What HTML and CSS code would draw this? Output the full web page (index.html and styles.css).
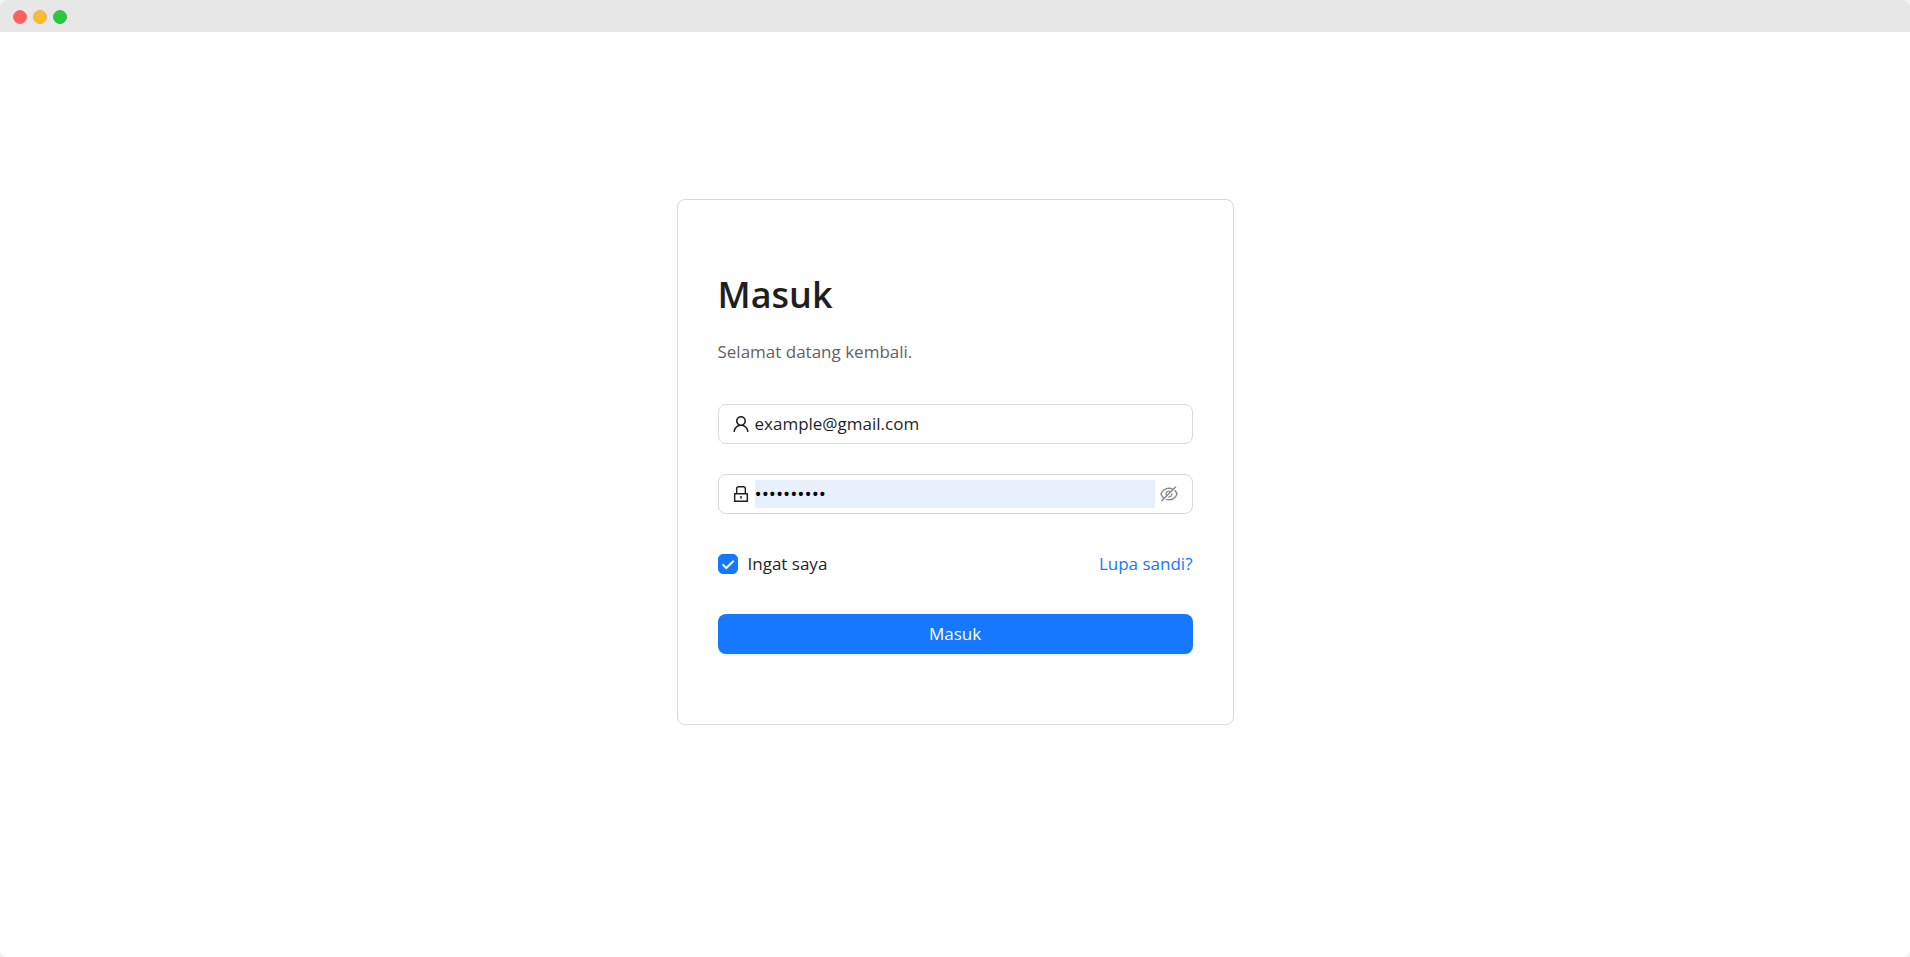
FILE: index.html
```html
<!DOCTYPE html>
<html lang="id">
<head>
  <meta charset="utf-8">
  <meta name="viewport" content="width=device-width, initial-scale=1">
  <title>Masuk</title>
  <link rel="stylesheet" href="styles.css">
</head>
<body>
  <div class="window">
    <header class="titlebar">
      <span class="dot dot-close"></span>
      <span class="dot dot-minimize"></span>
      <span class="dot dot-maximize"></span>
    </header>
    <main class="content">
      <form class="card">
        <h1 class="title">Masuk</h1>
        <p class="subtitle">Selamat datang kembali.</p>
        <div class="field">
          <svg class="icon" viewBox="64 64 896 896" aria-hidden="true"><path d="M858.5 763.6a374 374 0 00-80.6-119.5 375.63 375.63 0 00-119.5-80.6c-.4-.2-.8-.3-1.2-.5C719.5 518 760 444.7 760 362c0-137-111-248-248-248S264 225 264 362c0 82.7 40.5 156 102.8 201.1-.4.2-.8.3-1.2.5-44.8 18.9-85 46-119.5 80.6a375.63 375.63 0 00-80.6 119.5A371.7 371.7 0 00136 901.8a8 8 0 008 8.2h60c4.4 0 7.9-3.5 8-7.8 2-77.2 33-149.5 87.8-204.3 56.7-56.7 132-87.9 212.2-87.9s155.5 31.2 212.2 87.9C779 752.7 810 825 812 902.2c.1 4.4 3.6 7.8 8 7.8h60a8 8 0 008-8.2c-1-47.8-10.9-94.3-29.5-138.2zM512 534c-45.9 0-89.1-17.9-121.6-50.4S340 407.9 340 362c0-45.9 17.9-89.1 50.4-121.6S466.1 190 512 190s89.1 17.9 121.6 50.4S684 316.1 684 362c0 45.9-17.9 89.1-50.4 121.6S557.9 534 512 534z"/></svg>
          <input class="input" type="email" value="example@gmail.com" aria-label="Email">
        </div>
        <div class="field">
          <svg class="icon" viewBox="64 64 896 896" aria-hidden="true"><path d="M832 464h-68V240c0-70.7-57.3-128-128-128H388c-70.7 0-128 57.3-128 128v224h-68c-17.7 0-32 14.3-32 32v384c0 17.7 14.3 32 32 32h640c17.7 0 32-14.3 32-32V496c0-17.7-14.3-32-32-32zM332 240c0-30.9 25.1-56 56-56h248c30.9 0 56 25.1 56 56v224H332V240zm460 600H232V536h560v304zM484 701v53c0 4.4 3.6 8 8 8h40c4.4 0 8-3.6 8-8v-53a48.01 48.01 0 10-56 0z"/></svg>
          <input class="input input-filled" type="password" value="contoh1234" aria-label="Kata sandi">
          <button class="reveal" type="button" aria-label="Tampilkan sandi">
            <svg class="icon" viewBox="64 64 896 896" aria-hidden="true"><path d="M942.2 486.2Q889.47 375.11 816.7 305l-50.88 50.88C807.31 395.53 843.45 447.4 874.7 512 791.5 684.2 673.4 766 512 766q-72.67 0-133.87-22.38L323 798.75Q408 838 512 838q288.3 0 430.2-300.3a60.29 60.29 0 000-51.5zm-63.57-320.64L836 122.88a8 8 0 00-11.32 0L715.31 232.2Q624.86 186 512 186q-288.3 0-430.2 300.3a60.3 60.3 0 000 51.5q56.69 119.4 136.5 191.41L112.48 835a8 8 0 000 11.31L155.17 889a8 8 0 0011.31 0l712.15-712.12a8 8 0 000-11.32zM149.3 512C232.6 339.8 350.7 258 512 258c54.54 0 104.13 9.36 149.12 28.39l-70.3 70.3a176 176 0 00-238.13 238.13l-83.42 83.42C223.1 637.49 183.3 582.28 149.3 512zm246.7 0a112.11 112.11 0 01146.2-106.69L401.31 546.2A112 112 0 01396 512z"/><path d="M508 624c-3.46 0-6.87-.16-10.25-.47l-52.82 52.82a176.09 176.09 0 00227.42-227.42l-52.82 52.82c.31 3.38.47 6.79.47 10.25a111.94 111.94 0 01-112 112z"/></svg>
          </button>
        </div>
        <div class="options">
          <label class="remember">
            <span class="tick">
              <input class="checkbox" type="checkbox" checked>
              <svg class="check" viewBox="0 0 20 20" aria-hidden="true"><path d="M4.6 10.4l3.6 3.6 7.6-7.2"/></svg>
            </span>
            Ingat saya
          </label>
          <a class="link" href="#">Lupa sandi?</a>
        </div>
        <button class="submit" type="submit">Masuk</button>
      </form>
    </main>
  </div>
</body>
</html>
```
FILE: styles.css
```css
* {
  box-sizing: border-box;
}

body {
  margin: 0;
  background: #f2f2f2;
  color: #1f1f1f;
  font-family: "Segoe UI", "Open Sans", "Noto Sans", sans-serif;
  font-size: 17px;
  line-height: 28px;
}

.window {
  display: flex;
  flex-direction: column;
  min-height: 100vh;
  background: #fff;
  border-radius: 8px;
  overflow: hidden;
}

.titlebar {
  display: flex;
  align-items: center;
  gap: 6px;
  height: 32px;
  padding: 2px 13px 0;
  background: #e7e7e7;
}

.dot {
  width: 14px;
  height: 14px;
  border: 1px solid;
  border-radius: 50%;
}

.dot-close {
  background: #ff5f57;
  border-color: #f0706a;
}

.dot-minimize {
  background: #febc2e;
  border-color: #e6b055;
}

.dot-maximize {
  background: #28c840;
  border-color: #3cb84e;
}

.content {
  flex: 1;
  display: flex;
  align-items: center;
  justify-content: center;
  padding: 16px 16px 82px;
}

.card {
  display: flex;
  flex-direction: column;
  width: 100%;
  max-width: 557px;
  padding: 70px 40px;
  border: 1px solid #d9d9d9;
  border-radius: 8px;
}

.title {
  margin: 0;
  font-size: 36px;
  font-weight: 600;
  line-height: 50px;
}

.subtitle {
  margin: 18px 0 38px;
  color: #626262;
}

.field {
  display: flex;
  align-items: center;
  gap: 5px;
  height: 40px;
  margin-bottom: 30px;
  padding: 0 14px 0 13px;
  border: 1px solid #d9d9d9;
  border-radius: 8px;
}

.icon {
  display: block;
  flex: none;
  width: 18px;
  height: 18px;
  fill: currentColor;
}

.input {
  flex: 1;
  min-width: 0;
  height: 28px;
  padding: 0;
  border: 0;
  outline: 0;
  background: transparent;
  color: inherit;
  font: inherit;
}

.input-filled {
  background: #e8f0fe;
  color: #000;
  font-size: 19px;
}

.reveal {
  padding: 0;
  border: 0;
  background: none;
  color: #8c8c8c;
  cursor: pointer;
}

.options {
  display: flex;
  align-items: center;
  justify-content: space-between;
  height: 40px;
  margin-bottom: 30px;
}

.remember {
  display: flex;
  align-items: center;
  gap: 10px;
}

.tick {
  display: grid;
}

.checkbox,
.check {
  grid-area: 1 / 1;
  width: 20px;
  height: 20px;
  margin: 0;
}

.checkbox {
  appearance: none;
  border: 1px solid #d9d9d9;
  border-radius: 5px;
}

.checkbox:checked {
  border-color: #1677ff;
  background: #1677ff;
}

.check {
  fill: none;
  stroke: #fff;
  stroke-width: 2;
  pointer-events: none;
}

.link {
  color: #1677ff;
  text-decoration: none;
}

.submit {
  height: 40px;
  padding: 0 16px;
  border: 0;
  border-radius: 8px;
  background: #1677ff;
  box-shadow: 0 2px 0 rgba(5, 145, 255, 0.1);
  color: #fff;
  font: inherit;
  cursor: pointer;
}
```
